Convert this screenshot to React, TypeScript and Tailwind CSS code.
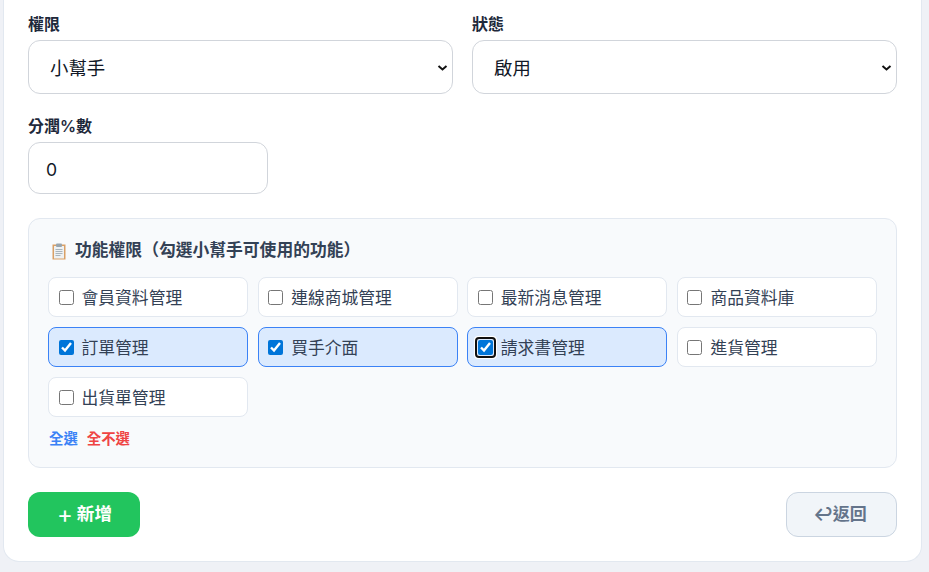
import React from 'react';

const font = { fontFamily: 'Inter, "Noto Sans CJK TC", "DejaVu Sans", sans-serif' };

const perms = [
	{ label: '會員資料管理', checked: false },
	{ label: '連線商城管理', checked: false },
	{ label: '最新消息管理', checked: false },
	{ label: '商品資料庫', checked: false },
	{ label: '訂單管理', checked: true },
	{ label: '買手介面', checked: true },
	{ label: '請求書管理', checked: true, focused: true },
	{ label: '進貨管理', checked: false },
	{ label: '出貨單管理', checked: false },
];

function ClipboardIcon() {
	return (
		<svg width="16" height="17" viewBox="0 0 16 17" className="shrink-0">
			<rect x="1.5" y="1.5" width="13" height="15" fill="#d9a066" />
			<rect x="3" y="3" width="10" height="12.5" fill="#eef1f3" />
			<rect x="5" y="0.5" width="6" height="3.5" rx="1" fill="#9aa5ad" />
			<path d="M4.5 6.5h7M4.5 8.5h7M4.5 10.5h7M4.5 12.5h5" stroke="#a9b4bc" strokeWidth="1" />
		</svg>
	);
}

function SelectField({ label, value }: { label: string; value: string }) {
	return (
		<div>
			<label className="mb-[6px] block h-[20px] text-base leading-[20px] font-semibold text-[#1e293b]">{label}</label>
			<div className="relative">
				<select defaultValue={value} className="h-[54px] w-full appearance-none rounded-xl border border-[#d1d5db] bg-white pt-[4px] pl-[21px] text-[18.4px] text-[#111827]">
					<option>{value}</option>
				</select>
				<svg width="11" height="8" viewBox="0 0 11 8" className="pointer-events-none absolute top-[24px] right-[5px]">
					<path d="M1.5 2 L5.5 5.5 L9.5 2" fill="none" stroke="#111" strokeWidth="2" />
				</svg>
			</div>
		</div>
	);
}

export default function App() {
	return (
		<div style={font} className="h-[572px] overflow-hidden bg-[#eff1f6] pl-[3px] pr-[7px]">
			<div className="h-[562px] rounded-b-2xl border-x border-b border-[#e2e8f0] bg-white px-[24px] pt-[14px]">
				<div className="grid grid-cols-2 gap-x-[19.2px]">
					<SelectField label="權限" value="小幫手" />
					<SelectField label="狀態" value="啟用" />
				</div>

				<div className="mt-[22px]">
					<label className="mb-[6px] block h-[20px] text-base leading-[20px] font-semibold text-[#1e293b]">分潤%數</label>
					<input
						type="text"
						defaultValue="0"
						className="h-[52px] w-[240px] rounded-xl border border-[#d1d5db] bg-white px-[17px] pt-[3px] text-[17.6px] text-[#111827]"
					/>
				</div>

				{/* Feature permissions */}
				<div className="mt-[24px] h-[250px] rounded-xl border border-[#e2e8f0] bg-[#f8fafc] px-[19px] pt-[21px]">
					<div className="mb-[15px] flex h-[22px] items-center gap-[8px] pl-[3px] text-[16.8px] font-semibold text-[#334155]">
						<ClipboardIcon />
						<span>功能權限（勾選小幫手可使用的功能）</span>
					</div>
					<div className="grid grid-cols-4 gap-x-[9.6px] gap-y-[10px]">
						{perms.map((perm) => (
							<label
								key={perm.label}
								className={
									perm.checked
										? 'flex h-[40px] items-center gap-[8px] rounded-lg border border-[#3b82f6] bg-[#dbeafe] pl-[9.5px] text-[16.8px] text-[#334155]'
										: 'flex h-[40px] items-center gap-[8px] rounded-lg border border-[#e2e8f0] bg-white pl-[9.5px] text-[16.8px] text-[#334155]'
								}
							>
								<input
									type="checkbox"
									defaultChecked={perm.checked}
									autoFocus={perm.focused}
									className="m-0 h-[15px] w-[15px] appearance-auto accent-[#0075d9]"
								/>
								<span className="pt-[3px]">{perm.label}</span>
							</label>
						))}
					</div>
					<div className="mt-[12px] flex gap-[9px] pl-[1px] text-[14.4px] leading-[20px] font-semibold">
						<span className="text-[#3b82f6]">全選</span>
						<span className="text-[#ef4444]">全不選</span>
					</div>
				</div>

				<div className="mt-[24px] flex items-center justify-between">
					<button className="flex h-[45px] w-[112px] items-center justify-center gap-[4px] rounded-xl bg-[#22c55e] pl-[1px] text-[17.6px] font-bold text-white">
						<span className="text-[24px] leading-none font-normal">+</span>
						<span>新增</span>
					</button>
					<button className="flex h-[45px] w-[111px] items-center justify-center rounded-xl border border-[#cbd5e1] bg-[#f1f5f9] pr-[3px] text-[17px] font-bold text-[#64748b]">
						<span>↩</span>
						<span>返回</span>
					</button>
				</div>
			</div>
		</div>
	);
}
